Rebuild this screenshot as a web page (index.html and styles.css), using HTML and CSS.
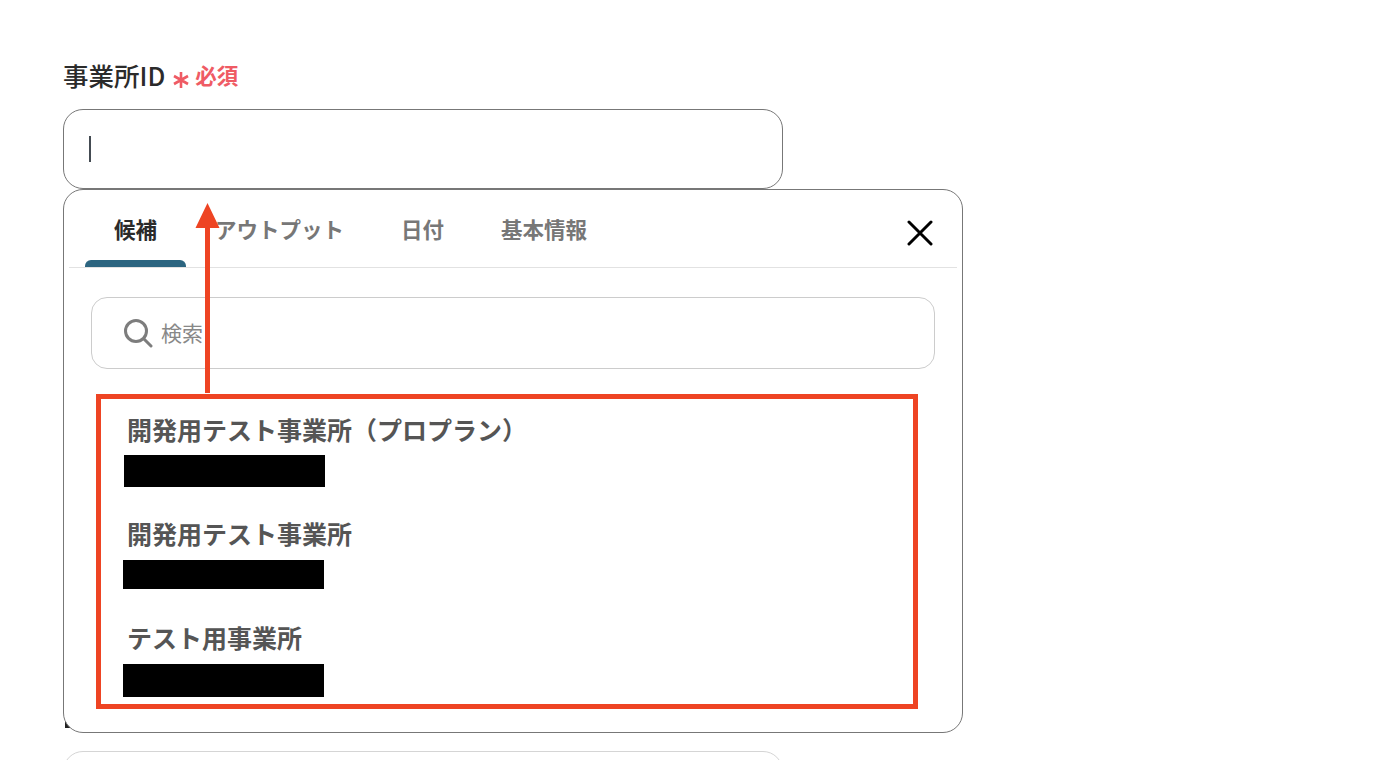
FILE: index.html
```html
<!DOCTYPE html>
<html lang="ja">
<head>
<meta charset="utf-8">
<title>事業所ID</title>
<link rel="stylesheet" href="styles.css">
</head>
<body>
<div class="page">
  <div class="field_label">
    <span class="label_text">事業所ID</span>
    <svg class="req_mark" width="18" height="18" viewBox="0 0 18 18">
      <path d="M9 1V17M2 5L16 13M16 5L2 13" stroke="#ef5b64" stroke-width="2.6" fill="none"/>
    </svg>
    <span class="req_text">必須</span>
  </div>
  <div class="text_input"><span class="caret"></span></div>

  <div class="popup_wrap">
    <span class="stray_dot"></span>
    <div class="popup">
      <div class="tab_bar">
        <div class="tab active">候補</div>
        <div class="tab">アウトプット</div>
        <div class="tab">日付</div>
        <div class="tab">基本情報</div>
        <svg class="close_icon" width="26" height="26" viewBox="0 0 26 26">
          <path d="M2 2L24 24M24 2L2 24" stroke="#000" stroke-width="3" stroke-linecap="round"/>
        </svg>
      </div>
      <div class="search_box">
        <svg class="search_icon" width="30" height="30" viewBox="0 0 30 30">
          <circle cx="13" cy="13" r="10.5" stroke="#7d7d7d" stroke-width="3" fill="none"/>
          <path d="M21 21L28 28" stroke="#7d7d7d" stroke-width="3" stroke-linecap="round"/>
        </svg>
        <span class="search_text">検索</span>
      </div>
      <div class="item_list">
        <div class="item first">
          <div class="item_title">開発用テスト事業所（プロプラン）</div>
          <div class="redact redact1"></div>
        </div>
        <div class="item">
          <div class="item_title">開発用テスト事業所</div>
          <div class="redact redact2"></div>
        </div>
        <div class="item">
          <div class="item_title">テスト用事業所</div>
          <div class="redact redact3"></div>
        </div>
      </div>

      <div class="red_box"></div>
      <svg class="red_arrow" width="27" height="191" viewBox="0 0 27 191">
        <path d="M13.5 0L25.5 25H16V190H11V25H1.5Z" fill="#ee4423"/>
      </svg>
    </div>
  </div>

  <div class="next_input"></div>
</div>
</body>
</html>
```

FILE: styles.css
```css
html, body {
  margin: 0;
  padding: 0;
  background: #fff;
}
body {
  font-family: "Noto Sans CJK JP", "Noto Sans", sans-serif;
}
.page {
  height: 760px;
  overflow: hidden;
  padding: 60px 0 0 63px;
  box-sizing: border-box;
}

.field_label {
  display: flex;
  align-items: center;
  height: 34px;
}
.label_text {
  font-size: 25.5px;
  font-weight: 500;
  color: #2b2b2b;
  line-height: 34px;
  margin-bottom: 4px;
}
.req_mark {
  margin: 6px 0 0 7px;
}
.req_text {
  margin: 0 0 4px 5px;
  font-size: 21.5px;
  font-weight: 700;
  color: #ef5b64;
  line-height: 34px;
}

.text_input {
  width: 720px;
  height: 80px;
  margin-top: 15px;
  border: 1px solid #777;
  border-radius: 20px;
  box-sizing: border-box;
  display: flex;
  align-items: center;
  padding-left: 25px;
}
.caret {
  width: 2px;
  height: 26px;
  background: #444b52;
}

.popup_wrap {
  position: relative;
  width: 900px;
}
.stray_dot {
  position: absolute;
  left: 2px;
  top: 533px;
  width: 5px;
  height: 6px;
  background: #222;
}
.popup {
  position: relative;
  height: 544px;
  background: #fff;
  border: 1px solid #777;
  border-radius: 20px;
  box-sizing: border-box;
}

.tab_bar {
  display: flex;
  align-items: flex-start;
  height: 77px;
  margin: 0 5px;
  padding-left: 16px;
  border-bottom: 1px solid #e2e2e2;
  position: relative;
}
.tab {
  padding: 21px 28px 0 29px;
  height: 77px;
  box-sizing: border-box;
  font-size: 21.5px;
  font-weight: 700;
  line-height: 36px;
  color: #777;
  position: relative;
}
.tab.active {
  color: #2b2b2b;
  padding-right: 29px;
}
.tab.active::after {
  content: "";
  position: absolute;
  left: 0;
  right: 0;
  bottom: 0;
  height: 7px;
  background: #2c6580;
  border-radius: 6px 6px 0 0;
}
.close_icon {
  margin: 30px 24px 0 auto;
}

.search_box {
  width: 844px;
  height: 72px;
  margin: 29px 0 0 27px;
  border: 1px solid #ccc;
  border-radius: 16px;
  box-sizing: border-box;
  display: flex;
  align-items: center;
  padding-left: 31px;
}
.search_icon {
  flex: none;
}
.search_text {
  margin: 0 0 2px 8px;
  font-size: 21px;
  color: #888;
}

.item_title {
  margin-left: 63px;
  font-size: 25px;
  font-weight: 700;
  line-height: 36px;
  color: #555;
  white-space: nowrap;
}
.item {
  margin-top: 28px;
}
.item.first {
  margin-top: 42px;
}
.redact {
  width: 201px;
  background: #000;
  margin: 9px 0 0 59px;
}
.redact1 {
  height: 32px;
  margin: 8px 0 0 60px;
}
.redact2 {
  height: 29px;
}
.redact3 {
  height: 33px;
}
.item:last-child {
  margin-top: 30px;
}

.red_box {
  position: absolute;
  left: 32px;
  top: 204px;
  width: 822px;
  height: 315px;
  border: 5px solid #ee4423;
  box-sizing: border-box;
}
.red_arrow {
  position: absolute;
  left: 130px;
  top: 13px;
}

.next_input {
  width: 720px;
  height: 80px;
  margin-top: 18px;
  border: 1px solid #d5d5d5;
  border-radius: 20px;
  box-sizing: border-box;
}
```
